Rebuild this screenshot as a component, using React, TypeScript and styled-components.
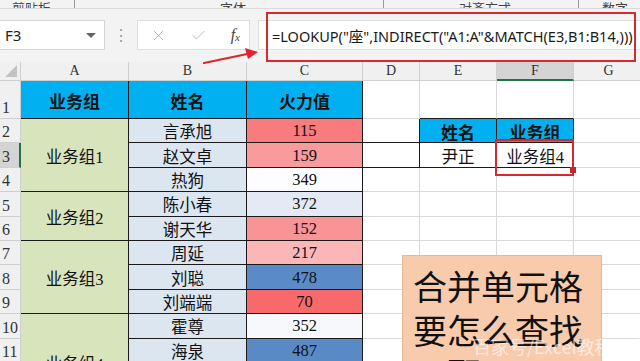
import styled, { createGlobalStyle } from "styled-components"
import { X, Check } from "lucide-react"

const GlobalStyle = createGlobalStyle`
  html, body {
    margin: 0;
    padding: 0;
    background: #ffffff;
  }
  body {
    font-family: "Noto Sans", "Noto Sans CJK SC", sans-serif;
  }
`

const CJK = `"Liberation Serif", "Noto Sans CJK SC", serif`

interface IRow {
  name: string
  value: number
  color: string
}

const rows: IRow[] = [
  { name: "言承旭", value: 115, color: "#f87b7d" },
  { name: "赵文卓", value: 159, color: "#f99a9c" },
  { name: "热狗", value: 349, color: "#fdfdff" },
  { name: "陈小春", value: 372, color: "#e4eaf5" },
  { name: "谢天华", value: 152, color: "#f99496" },
  { name: "周延", value: 217, color: "#fbb6b8" },
  { name: "刘聪", value: 478, color: "#5b8bc7" },
  { name: "刘端端", value: 70, color: "#f8696b" },
  { name: "霍尊", value: 352, color: "#f7f8fc" },
  { name: "海泉", value: 487, color: "#5a8ac6" },
  { name: "汪峰", value: 401, color: "#9db6dc" },
  { name: "王力宏", value: 266, color: "#fcd9da" },
]

const groups = [
  { label: "业务组1", start: 2, span: 3 },
  { label: "业务组2", start: 5, span: 2 },
  { label: "业务组3", start: 7, span: 3 },
  { label: "业务组4", start: 10, span: 4 },
]

const letters = ["A", "B", "C", "D", "E", "F", "G"]

export default function App() {
  const rowCount = 13
  return (
    <Page>
      <GlobalStyle />
      <Ribbon>
        <RibbonLabel $w={62}>剪贴板</RibbonLabel>
        <Launcher />
        <RibbonLabel $w={300} $center>字体</RibbonLabel>
        <Launcher />
        <RibbonLabel $w={186} $center>对齐方式</RibbonLabel>
        <Launcher />
        <RibbonLabel $w={56} $center>数字</RibbonLabel>
      </Ribbon>

      <FormulaBar>
        <NameBox>
          F3
          <DropArrow />
        </NameBox>
        <Grip>⋮</Grip>
        <ButtonBox>
          <X size={17} strokeWidth={1.1} color="#a6a6a6" />
          <Check size={17} strokeWidth={1.1} color="#a6a6a6" />
          <Fx>
            f<sub>x</sub>
          </Fx>
        </ButtonBox>
        <FormulaInput>=LOOKUP("座",INDIRECT("A1:A"&amp;MATCH(E3,B1:B14,)))</FormulaInput>
      </FormulaBar>

      <Sheet>
        <Corner>
          <CornerTriangle />
        </Corner>
        {letters.map((l, i) => (
          <ColHead key={l} $col={i + 2} $active={l === "F"}>
            {l}
          </ColHead>
        ))}
        <ColHead $col={9} />

        {Array.from({ length: rowCount }, (_, i) => (
          <RowHead key={i} $row={i + 2} $active={i + 1 === 3}>
            {i + 1}
          </RowHead>
        ))}

        <Cell $row={2} $col={2} $bg="#00b0f0" $bold $line="#1a1a1a">业务组</Cell>
        <Cell $row={2} $col={3} $bg="#00b0f0" $bold $line="#1a1a1a">姓名</Cell>
        <Cell $row={2} $col={4} $bg="#00b0f0" $bold $line="#1a1a1a">火力值</Cell>

        {groups.map((g) => (
          <Cell key={g.label} $row={g.start + 1} $span={g.span} $col={2} $bg="#d8e4bc" $line="#1a1a1a">
            {g.label}
          </Cell>
        ))}

        {rows.map((r, i) => (
          <Cell key={"b" + i} $row={i + 3} $col={3} $bg="#dce6f1" $line="#1a1a1a">
            {r.name}
          </Cell>
        ))}
        {rows.map((r, i) => (
          <Cell key={"c" + i} $row={i + 3} $col={4} $bg={r.color} $line="#1a1a1a">
            {r.value}
          </Cell>
        ))}

        {Array.from({ length: rowCount }, (_, i) => i + 1).map((r) =>
          [5, 6, 7, 8, 9].map((c) => {
            const inTable = (r === 2 || r === 3) && (c === 6 || c === 7)
            if (inTable) return null
            return (
              <Cell
                key={`e${r}-${c}`}
                $row={r + 1}
                $col={c}
                $line={c === 5 && (r === 2 || r === 3) ? "#1a1a1a" : "#d9d9d9"}
                $under={r === 1 && (c === 6 || c === 7) ? "#1a1a1a" : undefined}
              />
            )
          })
        )}

        <Cell $row={3} $col={6} $bg="#00b0f0" $bold $line="#1a1a1a">姓名</Cell>
        <Cell $row={3} $col={7} $bg="#00b0f0" $bold $line="#1a1a1a">业务组</Cell>
        <Cell $row={4} $col={6} $line="#1a1a1a">尹正</Cell>
        <Cell $row={4} $col={7} $line="#1a1a1a">业务组4</Cell>
      </Sheet>

      <FormulaHighlight />
      <CellHighlight>
        <FillHandle />
      </CellHighlight>
      <Arrow width="70" height="24" viewBox="0 0 70 24">
        <path d="M4 19 L52 9" stroke="#e0242c" strokeWidth="2.2" fill="none" strokeLinecap="round" />
        <path d="M45 4 L58 8 L48 15 Z" fill="#e0242c" />
      </Arrow>

      <Note>
        合并单元格
        <br />
        要怎么查找
        <br />
        匹配
      </Note>
      <Watermark>百家号/Excel教程学堂</Watermark>
    </Page>
  )
}

const Page = styled.div`
  position: relative;
  width: 640px;
  height: 361px;
  overflow: hidden;
  background: #f3f3f3;
`

const Ribbon = styled.div`
  height: 9px;
  display: flex;
  align-items: flex-end;
  overflow: hidden;
  padding-left: 12px;
  border-bottom: 1px solid #dadada;
  box-sizing: border-box;
  background: #f3f3f3;
`

const RibbonLabel = styled.div<{ $w: number; $center?: boolean }>`
  width: ${({ $w }) => $w}px;
  flex: none;
  font-family: "Noto Sans CJK SC", sans-serif;
  font-size: 13px;
  line-height: 13px;
  color: #444;
  margin-bottom: -6px;
  text-align: ${({ $center }) => ($center ? "center" : "left")};
`

const Launcher = styled.div`
  width: 9px;
  height: 12px;
  flex: none;
  border-left: 1px solid #9a9a9a;
  box-sizing: border-box;
  margin-bottom: -4px;
`

const FormulaBar = styled.div`
  height: 53px;
  box-sizing: border-box;
  padding-top: 11px;
  display: flex;
  align-items: flex-start;
  background: #f3f3f3;
`

const NameBox = styled.div`
  position: relative;
  width: 106px;
  height: 30px;
  margin-left: -1px;
  box-sizing: border-box;
  background: #fff;
  border: 1px solid #d6d6d6;
  display: flex;
  align-items: center;
  padding-left: 5px;
  font-family: "Noto Sans", sans-serif;
  font-size: 15px;
  color: #222;
`

const DropArrow = styled.div`
  position: absolute;
  right: 8px;
  top: 12px;
  width: 0;
  height: 0;
  border-left: 5px solid transparent;
  border-right: 5px solid transparent;
  border-top: 5px solid #666;
`

const Grip = styled.div`
  width: 32px;
  height: 30px;
  display: flex;
  align-items: center;
  justify-content: center;
  color: #9a9a9a;
  font-size: 16px;
`

const ButtonBox = styled.div`
  width: 113px;
  height: 30px;
  box-sizing: border-box;
  background: #fff;
  border: 1px solid #dedede;
  display: flex;
  align-items: center;
  justify-content: space-between;
  padding: 0 9px 0 12px;
`

const Fx = styled.span`
  font-family: "Liberation Serif", serif;
  font-style: italic;
  font-size: 16px;
  color: #444;
  sub {
    font-size: 11px;
    vertical-align: -1px;
  }
`

const FormulaInput = styled.div`
  flex: 1;
  margin-left: 8px;
  height: 30px;
  box-sizing: border-box;
  background: #fff;
  border: 1px solid #dedede;
  border-right: none;
  display: flex;
  align-items: center;
  padding-left: 13px;
  font-family: "Noto Sans", "Noto Sans CJK SC", sans-serif;
  font-size: 14.5px;
  color: #1a1a1a;
  white-space: nowrap;
`

const Sheet = styled.div`
  display: grid;
  grid-template-columns: 21px 108px 118px 116px 57px 77px 77px 70px 1fr;
  grid-template-rows: 19px 38px repeat(12, 24.4px);
  background: #fff;
`

const Corner = styled.div`
  grid-row: 1;
  grid-column: 1;
  background: #f0f0f0;
  border-right: 1px solid #cfcfcf;
  border-bottom: 1px solid #cfcfcf;
  position: relative;
`

const CornerTriangle = styled.div`
  position: absolute;
  right: 3px;
  bottom: 3px;
  width: 0;
  height: 0;
  border-left: 12px solid transparent;
  border-bottom: 12px solid #c3c3c3;
`

const ColHead = styled.div<{ $col: number; $active?: boolean }>`
  grid-row: 1;
  grid-column: ${({ $col }) => $col};
  background: ${({ $active }) => ($active ? "#d4d4d4" : "#f0f0f0")};
  border-right: 1px solid #cfcfcf;
  border-bottom: ${({ $active }) => ($active ? "2px solid #217346" : "1px solid #cfcfcf")};
  display: flex;
  align-items: center;
  justify-content: center;
  font-family: "Liberation Serif", serif;
  font-size: 14px;
  color: #333;
  box-sizing: border-box;
`

const RowHead = styled.div<{ $row: number; $active?: boolean }>`
  grid-row: ${({ $row }) => $row};
  grid-column: 1;
  background: ${({ $active }) => ($active ? "#d4d4d4" : "#f0f0f0")};
  border-right: ${({ $active }) => ($active ? "2px solid #217346" : "1px solid #cfcfcf")};
  border-bottom: 1px solid #cfcfcf;
  display: flex;
  align-items: flex-end;
  padding: 0 0 1px 2px;
  font-family: "Liberation Serif", serif;
  font-size: 16px;
  line-height: 18px;
  color: #333;
  box-sizing: border-box;
`

const Cell = styled.div<{
  $row: number
  $col: number
  $span?: number
  $bg?: string
  $bold?: boolean
  $line: string
  $under?: string
}>`
  grid-row: ${({ $row, $span }) => `${$row} / span ${$span ?? 1}`};
  grid-column: ${({ $col }) => $col};
  background: ${({ $bg }) => $bg ?? "#ffffff"};
  border-right: 1px solid ${({ $line }) => $line};
  border-bottom: 1px solid ${({ $under, $line }) => $under ?? $line};
  box-sizing: border-box;
  display: flex;
  align-items: center;
  justify-content: center;
  font-family: ${CJK};
  font-size: ${({ $bold }) => ($bold ? "17px" : "16.5px")};
  font-weight: ${({ $bold }) => ($bold ? 700 : 400)};
  color: #111;
  padding-top: 1px;
  white-space: nowrap;
  overflow: hidden;
`

const FormulaHighlight = styled.div`
  position: absolute;
  left: 266px;
  top: 12px;
  width: 370px;
  height: 50px;
  border: 2px solid #d42a32;
  box-sizing: border-box;
`

const CellHighlight = styled.div`
  position: absolute;
  left: 495px;
  top: 139px;
  width: 79px;
  height: 37px;
  border: 2px solid #d42a32;
  box-sizing: border-box;
`

const FillHandle = styled.div`
  position: absolute;
  right: -4px;
  top: 26px;
  width: 6px;
  height: 6px;
  background: #c0282e;
`

const Arrow = styled.svg`
  position: absolute;
  left: 200px;
  top: 44px;
`

const Note = styled.div`
  position: absolute;
  left: 402px;
  top: 255px;
  width: 200px;
  height: 130px;
  box-sizing: border-box;
  background: #f8cbad;
  border: 1px solid #e8b896;
  padding: 8px 0 0 10px;
  font-family: "Noto Sans CJK SC", sans-serif;
  font-weight: 400;
  font-size: 34px;
  line-height: 44px;
  color: #111;
`

const Watermark = styled.div`
  position: absolute;
  left: 473px;
  top: 333px;
  font-family: "Noto Sans CJK SC", sans-serif;
  font-size: 18px;
  color: rgba(255, 255, 255, 0.6);
  white-space: nowrap;
`
